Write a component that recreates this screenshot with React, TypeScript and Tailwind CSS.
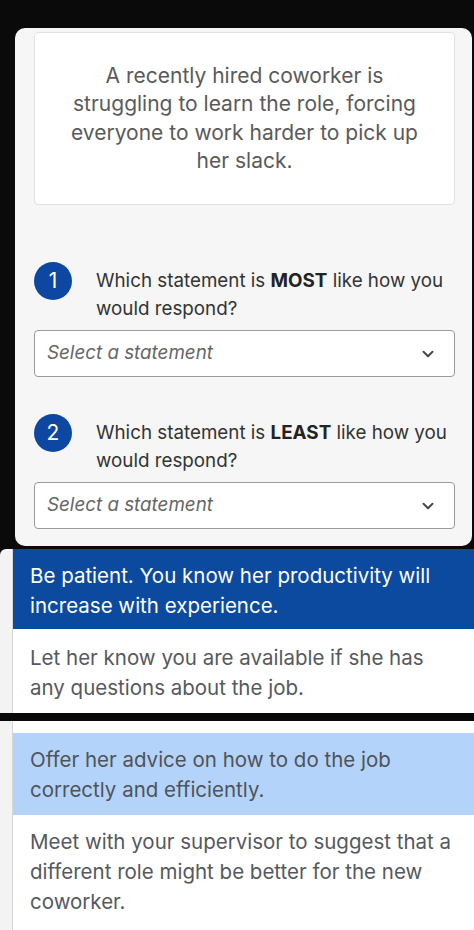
import { ChevronDown } from 'lucide-react'

const FONT = { fontFamily: 'Inter, "Noto Sans", sans-serif' }

function Question({ n, strong }: { n: number; strong: string }) {
  return (
    <div>
      <div className="flex items-start">
        <div className="w-[38px] h-[38px] rounded-full bg-[#0d47a1] text-white text-[21px] flex items-center justify-center shrink-0">
          {n}
        </div>
        <p className="ml-[24px] text-[18.8px] leading-[28px] text-[#333] pt-[5px]">
          Which statement is <b className="font-bold text-[#222]">{strong}</b> like how you would respond?
        </p>
      </div>
      <div className="mt-[7px] h-[47px] bg-white border border-[#9a9a9a] rounded-[4px] flex items-center justify-between pl-[12px] pr-[17px]">
        <span className="italic text-[18.8px] text-[#666]">Select a statement</span>
        <ChevronDown size={18} strokeWidth={2.5} className="text-[#444]" />
      </div>
    </div>
  )
}

function Option({ text, tone, className }: { text: string; tone: 'dark' | 'light' | 'plain'; className: string }) {
  const tones = {
    dark: 'bg-[#0b4a9e] text-white',
    light: 'bg-[#b4d3fb] text-[#4f5358]',
    plain: 'bg-white text-[#55595e]',
  }
  return (
    <div className={`pl-[17px] pr-[12px] text-[20.5px] leading-[30px] ${tones[tone]} ${className}`}>{text}</div>
  )
}

export default function App() {
  return (
    <div className="w-[474px] h-[930px] bg-[#0a0a0a] overflow-hidden flex flex-col" style={FONT}>
      <div className="h-[28px] shrink-0" />

      {/* scenario card */}
      <div className="ml-[15px] mr-[2px] h-[518px] shrink-0 bg-[#f6f6f6] rounded-[10px] pl-[19px] pr-[17px] pt-[4px]">
        <div className="bg-white border border-[#e2e2e2] rounded-[4px] h-[173px] flex items-center justify-center">
          <p className="w-[370px] text-center text-[21px] leading-[28.5px] text-[#5a5a5a]">
            A recently hired coworker is struggling to learn the role, forcing everyone to work harder to pick up her slack.
          </p>
        </div>
        <div className="mt-[57px]">
          <Question n={1} strong="MOST" />
        </div>
        <div className="mt-[37px]">
          <Question n={2} strong="LEAST" />
        </div>
      </div>

      <div className="h-[3px] shrink-0" />

      {/* dropdown list, upper part */}
      <div className="flex shrink-0 h-[164px]">
        <div className="w-[13px] bg-[#f3f3f3] border-r border-[#d6d6d6] rounded-tl-[6px]" />
        <div className="flex-1 flex flex-col">
          <Option
            tone="dark"
            className="h-[80px] pt-[12px]"
            text="Be patient. You know her productivity will increase with experience."
          />
          <Option
            tone="plain"
            className="flex-1 pt-[14px]"
            text="Let her know you are available if she has any questions about the job."
          />
        </div>
      </div>

      <div className="h-[8px] shrink-0 bg-[#080808]" />

      {/* dropdown list, lower part */}
      <div className="flex flex-1">
        <div className="w-[13px] bg-[#f3f3f3] border-r border-[#d6d6d6]" />
        <div className="flex-1 flex flex-col bg-white">
          <div className="h-[12px]" />
          <Option
            tone="light"
            className="h-[82px] pt-[12px]"
            text="Offer her advice on how to do the job correctly and efficiently."
          />
          <Option
            tone="plain"
            className="flex-1 pt-[12px]"
            text="Meet with your supervisor to suggest that a different role might be better for the new coworker."
          />
        </div>
      </div>
    </div>
  )
}
